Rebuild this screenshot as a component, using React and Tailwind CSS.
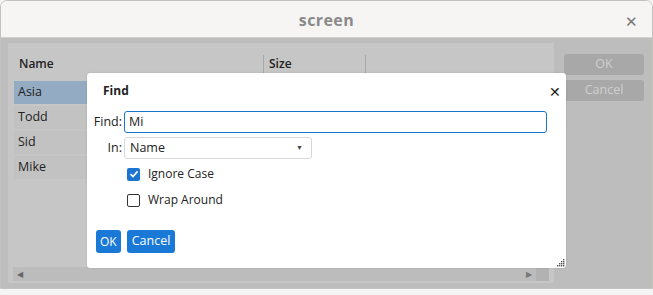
import React from "react";

const rows = ["Asia", "Todd", "Sid", "Mike"];

const App = () => {
  return (
    <div className="w-[653px] h-[295px] bg-[#f4f4f4] overflow-hidden" style={{ fontFamily: "'Open Sans', 'Noto Sans', sans-serif" }}>
      <div className="relative w-[653px] h-[289px] rounded-t-[7px] border border-[#c4c2bf] overflow-hidden flex flex-col">
        {/* title bar */}
        <div className="h-[37px] shrink-0 bg-[#f6f5f4] border-b border-[#d6d1cd] flex items-center justify-center relative">
          <span className="text-[16px] font-bold text-[#8a8a8a] tracking-wide mt-[2px]">screen</span>
          <span className="absolute right-[14px] top-[9px] text-[15px] text-[#777]">✕</span>
        </div>

        {/* window body (dimmed by modal) */}
        <div className="flex-1 bg-[#bdbdbd] flex gap-[10px] pl-[7px] pr-[8px] pt-[5px] pb-[5px]">
          <div className="w-[546px] bg-[#c6c6c6] flex flex-col">
            <div className="h-[36px] flex items-end pb-[6px] text-[12px] font-semibold text-[#222]">
              <div className="w-[255px] pl-[11px] leading-[18px]">Name</div>
              <div className="w-[102px] border-l border-[#a9a9a9] pl-[5px] leading-[18px]">Size</div>
              <div className="border-l border-[#a9a9a9] h-[18px]"></div>
            </div>
            <div className="flex flex-col gap-[2px] pl-[6px] mt-[2px]">
              {rows.map((r, i) => (
                <div key={r} className={`h-[23px] w-[540px] flex items-center pl-[4px] text-[12.5px] text-[#222] ${i === 0 ? "bg-[#93acc3]" : "bg-[#c2c2c2]"}`}>
                  {r}
                </div>
              ))}
            </div>
            <div className="flex-1"></div>
            <div className="h-[14px] mb-[2px] ml-[5px] mr-[5px] bg-[#bcbcbc] flex items-center relative">
              <span className="ml-[4px] text-[8px] text-[#666]">◀</span>
              <div className="flex-1"></div>
              <span className="mr-[4px] text-[8px] text-[#777]">▶</span>
              <div className="w-[13px] h-[14px] bg-[#b2b2b2]"></div>
            </div>
          </div>
          <div className="w-[80px] flex flex-col gap-[5px] pt-[11px]">
            <div className="h-[21px] rounded-[3px] bg-[#a8a8a8] text-[#cfcfcf] text-[12.5px] flex items-center justify-center">OK</div>
            <div className="h-[21px] rounded-[3px] bg-[#a8a8a8] text-[#cfcfcf] text-[12.5px] flex items-center justify-center">Cancel</div>
          </div>
        </div>

        {/* Find dialog */}
        <div className="absolute left-[86px] top-[72px] w-[479px] h-[195px] bg-white rounded-[3px] shadow-[0_0_2px_rgba(0,0,0,0.15)] text-[12px] text-[#222]">
          <div className="flex items-center justify-between pl-[16px] pr-[5px] h-[36px]">
            <span className="font-bold text-[12px]">Find</span>
            <span className="text-[14px] text-[#222]">✕</span>
          </div>
          <div className="flex flex-col gap-[4px] mt-[2px]">
            <div className="flex items-center">
              <div className="w-[36px] text-right pr-[1px] text-[12.5px]">Find:</div>
              <div className="ml-[1px] w-[423px] h-[22px] rounded-[3px] border border-[#1a74d0] flex items-center pl-[4px] text-[12.5px]">Mi</div>
            </div>
            <div className="flex items-center">
              <div className="w-[36px] text-right pr-[1px] text-[12.5px]">In:</div>
              <div className="ml-[1px] w-[188px] h-[22px] rounded-[3px] border border-[#d8d8d8] flex items-center justify-between pl-[5px] pr-[8px] text-[12.5px]">
                <span>Name</span>
                <span className="text-[7px] text-[#444]">▼</span>
              </div>
            </div>
            <div className="flex items-center ml-[40px] h-[22px]">
              <div className="w-[13px] h-[13px] rounded-[2px] bg-[#1a74d0] flex items-center justify-center">
                <svg width="10" height="10" viewBox="0 0 10 10"><path d="M1.5 5.2 L4 7.6 L8.6 2.4" stroke="white" strokeWidth="1.6" fill="none" /></svg>
              </div>
              <span className="ml-[8px]">Ignore Case</span>
            </div>
            <div className="flex items-center ml-[40px] h-[22px]">
              <div className="w-[13px] h-[13px] rounded-[2px] border border-[#333]"></div>
              <span className="ml-[8px]">Wrap Around</span>
            </div>
          </div>
          <div className="flex gap-[6px] pl-[9px] mt-[19px]">
            <div className="h-[23px] px-[4px] rounded-[3px] bg-[#1a78d6] text-white flex items-center">OK</div>
            <div className="h-[23px] px-[5px] rounded-[3px] bg-[#1a78d6] text-white flex items-center text-[12.5px]">Cancel</div>
          </div>
          <svg className="absolute right-[1px] bottom-[1px]" width="8" height="8" viewBox="0 0 8 8" fill="#555">
            <rect x="6" y="0" width="1.4" height="1.4" />
            <rect x="4" y="2" width="1.4" height="1.4" />
            <rect x="6" y="2" width="1.4" height="1.4" />
            <rect x="2" y="4" width="1.4" height="1.4" />
            <rect x="4" y="4" width="1.4" height="1.4" />
            <rect x="6" y="4" width="1.4" height="1.4" />
            <rect x="0" y="6" width="1.4" height="1.4" />
            <rect x="2" y="6" width="1.4" height="1.4" />
            <rect x="4" y="6" width="1.4" height="1.4" />
            <rect x="6" y="6" width="1.4" height="1.4" />
          </svg>
        </div>
      </div>
    </div>
  );
};

export default App;
